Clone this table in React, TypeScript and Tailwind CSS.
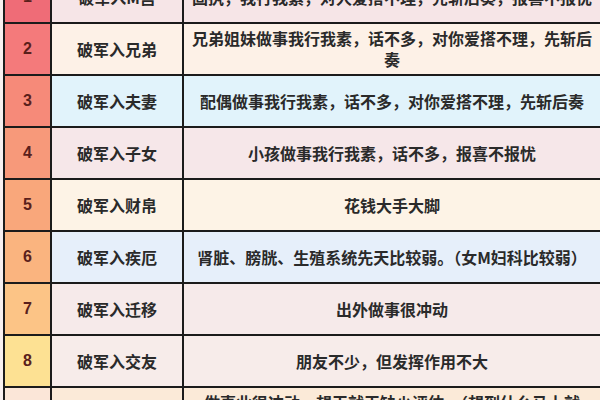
import React from "react";

type Row = {
  n: string;
  numBg: string;
  bg: string;
  name: string;
  desc: string[];
};

const rows: Row[] = [
  { n: "1", numBg: "bg-[#ef6c77]", bg: "bg-[#f6e5e7]", name: "破军入M宫", desc: ["固执，我行我素，对人爱搭不理，先斩后奏，报喜不报忧"] },
  { n: "2", numBg: "bg-[#f47a7b]", bg: "bg-[#fdf1e7]", name: "破军入兄弟", desc: ["兄弟姐妹做事我行我素，话不多，对你爱搭不理，先斩后", "奏"] },
  { n: "3", numBg: "bg-[#f68a79]", bg: "bg-[#e1f3fb]", name: "破军入夫妻", desc: ["配偶做事我行我素，话不多，对你爱搭不理，先斩后奏"] },
  { n: "4", numBg: "bg-[#f7997a]", bg: "bg-[#f6e7e9]", name: "破军入子女", desc: ["小孩做事我行我素，话不多，报喜不报忧"] },
  { n: "5", numBg: "bg-[#f9a77b]", bg: "bg-[#fdf3e6]", name: "破军入财帛", desc: ["花钱大手大脚"] },
  { n: "6", numBg: "bg-[#fab47f]", bg: "bg-[#e6effa]", name: "破军入疾厄", desc: ["肾脏、膀胱、生殖系统先天比较弱。（女M妇科比较弱）"] },
  { n: "7", numBg: "bg-[#fcc486]", bg: "bg-[#f6eaea]", name: "破军入迁移", desc: ["出外做事很冲动"] },
  { n: "8", numBg: "bg-[#fde193]", bg: "bg-[#f7ecea]", name: "破军入交友", desc: ["朋友不少，但发挥作用不大"] },
  { n: "9", numBg: "bg-[#fbe6d8]", bg: "bg-[#fbead8]", name: "破军入官禄", desc: ["做事业很冲动，想干就干缺少评估，（想到什么马上就", "去做）"] },
];

export default function App() {
  return (
    <div
      className="w-[600px] h-[400px] overflow-hidden bg-[#f8f0f0]"
      style={{ fontFamily: '"Noto Sans CJK SC", "Noto Sans", sans-serif' }}
    >
      <div className="ml-[3px] mt-[-28px] border-l-2 border-[#1b1b1b] flex flex-col">
        {rows.map((r) => (
          <div key={r.n} className="flex h-[52px] border-b-2 border-[#1b1b1b] shrink-0">
            <div
              className={`w-[47px] border-r-2 border-[#1b1b1b] flex items-center justify-center text-[16px] font-bold text-[#5a1f1c] ${r.numBg}`}
              style={{ fontFamily: '"Liberation Sans", Arial, sans-serif' }}
            >
              {r.n}
            </div>
            <div className={`w-[132px] border-r-2 border-[#1b1b1b] flex items-center justify-center text-[16px] font-bold text-[#2a2a2a] ${r.bg}`}>
              {r.name}
            </div>
            <div className={`flex-1 flex flex-col items-center justify-center text-[16px] leading-[21px] font-bold text-[#2a2a2a] text-center whitespace-nowrap ${r.bg}`}>
              {r.desc.map((d, i) => (
                <div key={i}>{d}</div>
              ))}
            </div>
          </div>
        ))}
      </div>
    </div>
  );
}
